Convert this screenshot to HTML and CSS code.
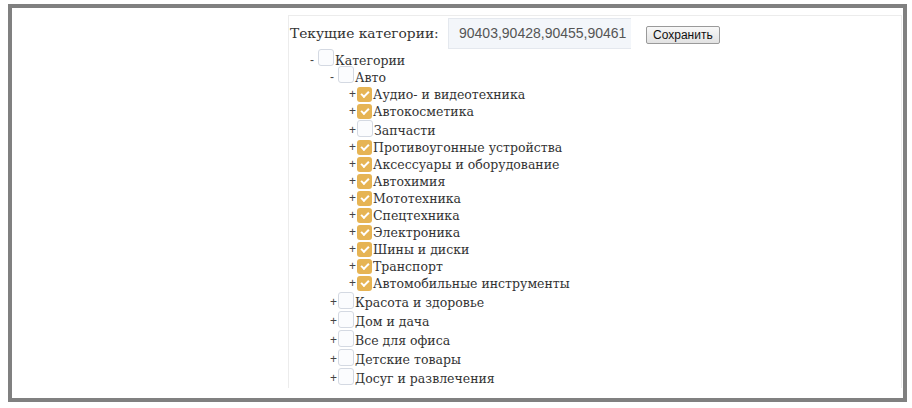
FILE: index.html
```html
<!DOCTYPE html>
<html lang="ru">
<head>
    <meta charset="UTF-8">
    <title>Категории</title>
    <link rel="stylesheet" href="styles.css">
</head>
<body>
    <div class="frame">
        <div class="panel">
            <div class="current">
                <span class="current-label">Текущие категории:</span>
                <div class="current-value">90403,90428,90455,90461</div>
                <button class="save-btn">Сохранить</button>
            </div>

            <ul class="tree">
                <li>
                    <div class="row open"><span class="sign">-</span><span class="box"></span><span class="name">Категории</span></div>
                    <ul>
                        <li>
                            <div class="row open"><span class="sign">-</span><span class="box"></span><span class="name">Авто</span></div>
                            <ul>
                                <li><div class="row"><span class="sign">+</span><span class="box on"></span><span class="name">Аудио- и видеотехника</span></div></li>
                                <li><div class="row"><span class="sign">+</span><span class="box on"></span><span class="name">Автокосметика</span></div></li>
                                <li><div class="row off"><span class="sign">+</span><span class="box"></span><span class="name">Запчасти</span></div></li>
                                <li><div class="row"><span class="sign">+</span><span class="box on"></span><span class="name">Противоугонные устройства</span></div></li>
                                <li><div class="row"><span class="sign">+</span><span class="box on"></span><span class="name">Аксессуары и оборудование</span></div></li>
                                <li><div class="row"><span class="sign">+</span><span class="box on"></span><span class="name">Автохимия</span></div></li>
                                <li><div class="row"><span class="sign">+</span><span class="box on"></span><span class="name">Мототехника</span></div></li>
                                <li><div class="row"><span class="sign">+</span><span class="box on"></span><span class="name">Спецтехника</span></div></li>
                                <li><div class="row"><span class="sign">+</span><span class="box on"></span><span class="name">Электроника</span></div></li>
                                <li><div class="row"><span class="sign">+</span><span class="box on"></span><span class="name">Шины и диски</span></div></li>
                                <li><div class="row"><span class="sign">+</span><span class="box on"></span><span class="name">Транспорт</span></div></li>
                                <li><div class="row"><span class="sign">+</span><span class="box on"></span><span class="name">Автомобильные инструменты</span></div></li>
                            </ul>
                        </li>
                        <li><div class="row off"><span class="sign">+</span><span class="box"></span><span class="name">Красота и здоровье</span></div></li>
                        <li><div class="row off"><span class="sign">+</span><span class="box"></span><span class="name">Дом и дача</span></div></li>
                        <li><div class="row off"><span class="sign">+</span><span class="box"></span><span class="name">Все для офиса</span></div></li>
                        <li><div class="row off"><span class="sign">+</span><span class="box"></span><span class="name">Детские товары</span></div></li>
                        <li><div class="row off"><span class="sign">+</span><span class="box"></span><span class="name">Досуг и развлечения</span></div></li>
                    </ul>
                </li>
            </ul>
        </div>
    </div>
</body>
</html>
```

FILE: styles.css
```css
body {
    margin: 0;
    background: #fff;
    font-family: "DejaVu Serif", serif;
    color: #333;
}

.frame {
    margin: 4px 5px 6px 8px;
    height: 390px;
    border: 4px solid #808080;
    box-sizing: content-box;
    overflow: hidden;
}

.panel {
    margin: 7px 1px 0 276px;
    height: 372px;
    border: 1px solid #ececec;
    border-bottom: none;
}

/* current categories line */
.current {
    display: flex;
    align-items: center;
    height: 30px;
    margin-top: 2px;
}

.current-label {
    font-size: 13.8px;
    width: 159px;
    padding-left: 1px;
    color: #333;
}

.current-value {
    width: 172px;
    height: 29px;
    line-height: 29px;
    padding-left: 10px;
    margin-left: -1px;
    background: #f3f6fa;
    border: 1px solid #e4e8ee;
    border-right: none;
    font-family: "Liberation Sans", Arial, sans-serif;
    font-size: 14px;
    color: #555;
    white-space: nowrap;
    overflow: hidden;
}

.save-btn {
    margin-left: 15px;
    margin-top: 4px;
    height: 18px;
    padding: 0 6px;
    font-family: "Liberation Sans", Arial, sans-serif;
    font-size: 12px;
    color: #111;
    background: linear-gradient(#f8f8f8, #e2e2e2);
    border: 1px solid #9a9a9a;
    border-radius: 2px;
}

/* tree */
.tree,
.tree ul {
    list-style: none;
    margin: 0;
    padding: 0;
}

.tree {
    margin-left: 21px;
    margin-top: 4px;
}

.tree ul {
    padding-left: 20px;
}

.tree ul ul {
    padding-left: 19px;
}

.row {
    display: flex;
    align-items: center;
    height: 17px;
    font-size: 12.5px;
    line-height: 17px;
}

.row.off {
    height: 19px;
    align-items: flex-end;
}

.sign {
    width: 8px;
    font-family: "Liberation Sans", Arial, sans-serif;
    font-size: 12px;
    color: #444;
}

.box {
    width: 14px;
    height: 15px;
    border: 1px solid #d4d9e2;
    border-radius: 3px;
    background: #fbfcfe;
    box-sizing: content-box;
}

.row.open .box {
    align-self: flex-start;
    margin-top: -3px;
}

.row.off .box {
    align-self: flex-start;
}

.box.on {
    position: relative;
    width: 15px;
    height: 15px;
    border: none;
    background: #e6b454;
}

.box.on::after {
    content: '';
    position: absolute;
    left: 4px;
    top: 4px;
    width: 6px;
    height: 3px;
    border-left: 2px solid #fff;
    border-bottom: 2px solid #fff;
    transform: rotate(-45deg);
}

.name {
    padding-left: 1px;
    white-space: nowrap;
}
```
